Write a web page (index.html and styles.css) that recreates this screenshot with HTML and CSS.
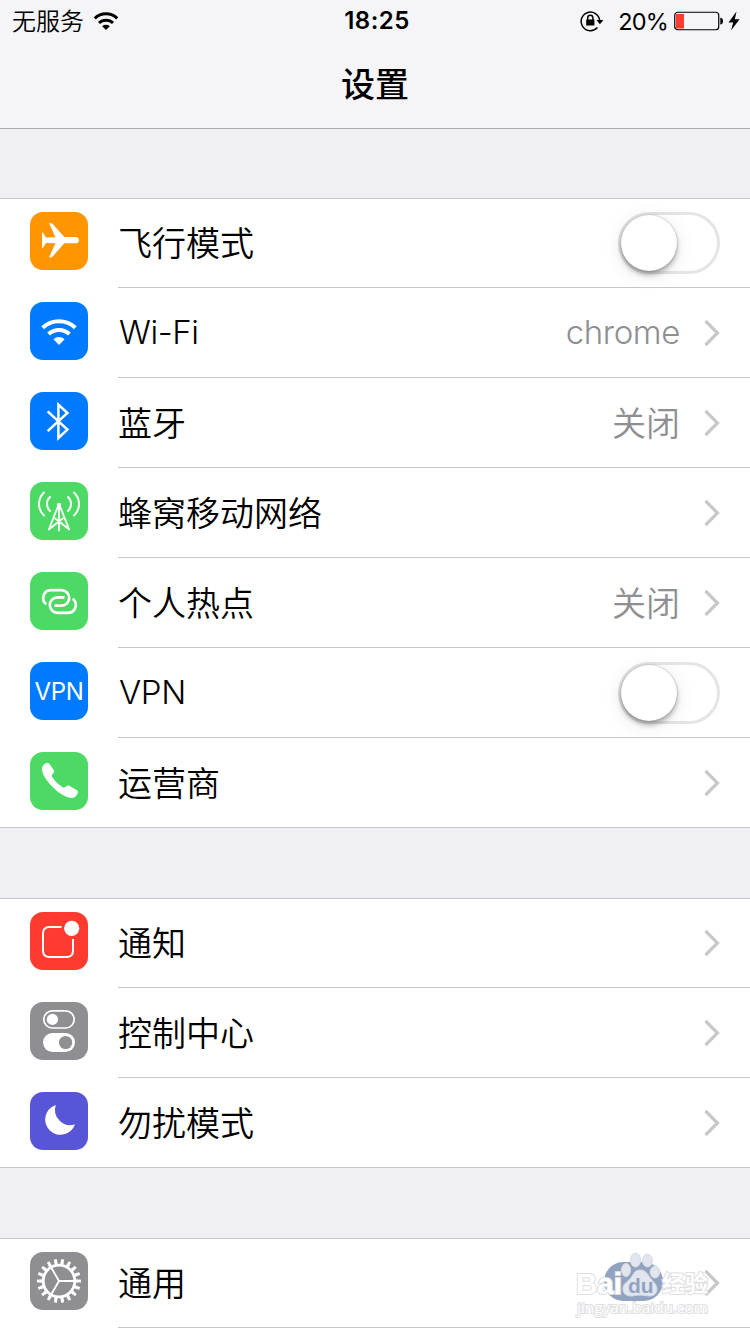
FILE: index.html
```html
<!DOCTYPE html>
<html lang="zh-CN">
<head>
    <meta charset="UTF-8">
    <meta name="viewport" content="width=device-width, initial-scale=1.0">
    <title>设置</title>
    <link rel="stylesheet" href="styles.css">
</head>
<body>
    <header class="header">
        <div class="status-bar">
            <div class="status-left">
                <span class="carrier">无服务</span>
                <svg class="status-wifi" width="26" height="20" viewBox="0 0 26 20">
                    <path d="M1.8 7.4A16 16 0 0 1 24.2 7.4M6 12A10.2 10.2 0 0 1 20 12" fill="none" stroke="#000" stroke-width="3"/>
                    <path d="M9.2 15.2a5.6 5.6 0 0 1 7.6 0L13 19z"/>
                </svg>
            </div>
            <span class="time">18:25</span>
            <div class="status-right">
                <svg class="lock" width="24" height="22" viewBox="0 0 24 22">
                    <path d="M17.4 17.6A9.3 9.3 0 1 1 19.7 10.5" fill="none" stroke="#000" stroke-width="1.5"/>
                    <path d="M16.4 10h7l-3.5 4.2zM6.2 9.6h8.2v6H6.2z"/>
                    <path d="M7.7 10V7.8a2.6 2.6 0 0 1 5.2 0V10" fill="none" stroke="#000" stroke-width="1.5"/>
                </svg>
                <span class="percent">20%</span>
                <svg class="battery" width="50" height="20" viewBox="0 0 50 20">
                    <rect x=".75" y="1.25" width="44" height="17.5" rx="3" fill="none" stroke="#000" stroke-width="1.2"/>
                    <rect x="2" y="3" width="8" height="14.5" fill="#ff3b30"/>
                    <path d="M46.3 6.8q2.7.4 2.7 3.4t-2.7 3.4z"/>
                </svg>
                <svg class="bolt" width="12" height="20" viewBox="0 0 12 20">
                    <path d="M8.5.5.5 11.5h4.7L3 19.5l8.6-11.3H6.8z"/>
                </svg>
            </div>
        </div>
        <h1 class="title">设置</h1>
    </header>

    <main>
        <section class="group">
            <div class="row">
                <svg class="icon orange" viewBox="0 0 58 58">
                    <path d="M49 28.2c0-2-1.5-3.1-4-3.1H34.3L23 12.2Q22 11 19 11l6.4 14.2-9.4.3-2.7-4.3q-.5-1-1.3-1v16q.8 0 1.3-1l2.7-4.3 9.4.3L19 45.4q3 0 4-1.2l11.3-12.9H45c2.5 0 4-1.1 4-3.1z"/>
                </svg>
                <div class="cell">
                    <span class="label">飞行模式</span>
                    <span class="toggle"></span>
                </div>
            </div>
            <div class="row">
                <svg class="icon blue" viewBox="0 0 58 58">
                    <path class="line" stroke-width="4" d="M12.7 25.8A23.8 23.8 0 0 1 45.3 25.8M18.6 32A15.2 15.2 0 0 1 39.4 32"/>
                    <path d="M23.4 37.2a8.1 8.1 0 0 1 11.2 0L29 42.9z"/>
                </svg>
                <div class="cell">
                    <span class="label latin">Wi-Fi</span>
                    <span class="value latin">chrome</span>
                    <svg class="chevron" viewBox="0 0 16 28"><path d="M1.5 2 13.5 14 1.5 26"/></svg>
                </div>
            </div>
            <div class="row">
                <svg class="icon blue" viewBox="0 0 58 58">
                    <path class="line" stroke-width="2.5" d="M17.6 19.4 37.4 37.6 28.4 46V12.6l9 8.4-19.8 18.2"/>
                </svg>
                <div class="cell">
                    <span class="label">蓝牙</span>
                    <span class="value">关闭</span>
                    <svg class="chevron" viewBox="0 0 16 28"><path d="M1.5 2 13.5 14 1.5 26"/></svg>
                </div>
            </div>
            <div class="row">
                <svg class="icon green" viewBox="0 0 58 58">
                    <g class="line round" stroke-width="2">
                        <path d="M14 10.5Q9 15 9 22t5 11.5M20 15q-3 2.7-3 7t3 7M44 10.500q5 4.500 5 11.500t-5 11.500M38 15q3 2.700 3 7t-3 7"/>
                        <path stroke-width="1.800" d="M29 23v25.500M28.500 23 18.800 47.500M29.500 23 39.200 47.500M19 47.300l13.800-10.800M39 47.300 25.200 36.500"/>
                    </g>
                    <circle cx="29" cy="23" r="2.200"/>
                </svg>
                <div class="cell">
                    <span class="label">蜂窝移动网络</span>
                    <svg class="chevron" viewBox="0 0 16 28"><path d="M1.5 2 13.5 14 1.5 26"/></svg>
                </div>
            </div>
            <div class="row">
                <svg class="icon green" viewBox="0 0 58 58">
                    <g class="line" stroke-width="2.700">
                        <path id="link" d="M16.300 32.200A7.800 7.800 0 0 1 21 18.200H31.500a7.700 7.700 0 0 1 0 15.400H24.500"/>
                        <use href="#link" transform="rotate(180 29.500 29.500)"/>
                    </g>
                </svg>
                <div class="cell">
                    <span class="label">个人热点</span>
                    <span class="value">关闭</span>
                    <svg class="chevron" viewBox="0 0 16 28"><path d="M1.5 2 13.5 14 1.5 26"/></svg>
                </div>
            </div>
            <div class="row">
                <span class="icon blue vpn">VPN</span>
                <div class="cell">
                    <span class="label latin">VPN</span>
                    <span class="toggle"></span>
                </div>
            </div>
            <div class="row">
                <svg class="icon green" viewBox="0 0 58 58">
                    <path d="M12 17c0-3.500 2.500-5.700 5.200-6 1-.2 1.700.2 2.300 1l4.200 6c.7 1 .6 1.700 0 2.600l-1.600 2.200c-.5.7-.4 1.500.1 2.300 3 4.500 6 7.500 10.500 10.200.8.500 1.600.4 2.300-.1l2.300-1.400c.8-.5 1.500-.5 2.400.1l6.900 4.200c.9.600 1.400 1.200 1.200 2.200-.7 3.200-2.900 5.700-5.700 5.700-5.600 0-12.600-4.200-18.600-10.200C16.500 28.800 12 22.500 12 17z"/>
                </svg>
                <div class="cell">
                    <span class="label">运营商</span>
                    <svg class="chevron" viewBox="0 0 16 28"><path d="M1.5 2 13.5 14 1.5 26"/></svg>
                </div>
            </div>
        </section>

        <section class="group">
            <div class="row">
                <svg class="icon red" viewBox="0 0 58 58">
                    <path class="line" stroke-width="2" d="M31.500 15H19.500Q13 15 13 21.500V38.500Q13 45 19.500 45H36.500Q43 45 43 38.500V27"/>
                    <circle cx="41.700" cy="16.300" r="7.600"/>
                </svg>
                <div class="cell">
                    <span class="label">通知</span>
                    <svg class="chevron" viewBox="0 0 16 28"><path d="M1.5 2 13.5 14 1.5 26"/></svg>
                </div>
            </div>
            <div class="row">
                <svg class="icon gray" viewBox="0 0 58 58">
                    <rect class="line" x="13.800" y="8.800" width="30.400" height="17.200" rx="8.600" stroke-width="1.700"/>
                    <circle cx="22.400" cy="17.400" r="5.600"/>
                    <rect x="13" y="31" width="32" height="19" rx="9.500"/>
                    <circle cx="35.600" cy="40.500" r="6.600" fill="#8e8e93"/>
                </svg>
                <div class="cell">
                    <span class="label">控制中心</span>
                    <svg class="chevron" viewBox="0 0 16 28"><path d="M1.5 2 13.5 14 1.5 26"/></svg>
                </div>
            </div>
            <div class="row">
                <svg class="icon purple" viewBox="0 0 58 58">
                    <path d="M25.800 12.900A15.300 15.300 0 1 0 45 32.300 15.300 15.300 0 0 1 25.800 12.900z"/>
                </svg>
                <div class="cell">
                    <span class="label">勿扰模式</span>
                    <svg class="chevron" viewBox="0 0 16 28"><path d="M1.5 2 13.5 14 1.5 26"/></svg>
                </div>
            </div>
        </section>

        <section class="group">
            <div class="row">
                <svg class="icon gray" viewBox="0 0 58 58">
                    <g class="line">
                        <circle cx="29" cy="29" r="15.800" stroke-width="2.800"/>
                        <!-- teeth, wide at the base and narrow at the tip -->
                        <circle cx="29" cy="29" r="18.200" stroke-width="2.800" pathLength="36" stroke-dasharray="1 1" stroke-dashoffset=".5"/>
                        <circle cx="29" cy="29" r="20.600" stroke-width="2.800" pathLength="36" stroke-dasharray=".8 1.200" stroke-dashoffset=".4"/>
                        <path stroke-width="1.800" d="M29 29h15M29 29l-7.500-13M29 29l-7.500 13"/>
                    </g>
                </svg>
                <div class="cell">
                    <span class="label">通用</span>
                    <svg class="chevron" viewBox="0 0 16 28"><path d="M1.5 2 13.5 14 1.5 26"/></svg>
                </div>
            </div>
        </section>
    </main>

    <svg class="watermark" width="144" height="70" viewBox="0 0 144 70">
        <rect x="34" y="14" width="59" height="39" rx="19.500" fill="#91a3c1"/>
        <g class="outlined">
            <text class="mark-name" x="6" y="46" textLength="46" lengthAdjust="spacingAndGlyphs">Bai</text>
            <text class="mark-cn" x="92" y="44">经验</text>
            <text class="mark-url" x="7" y="65" textLength="131" lengthAdjust="spacingAndGlyphs">jingyan.baidu.com</text>
        </g>
        <g class="paw">
            <ellipse cx="56" cy="22" rx="4.500" ry="6.500"/>
            <ellipse cx="65.500" cy="12" rx="5" ry="7"/>
            <ellipse cx="77.500" cy="12.500" rx="5" ry="6.500"/>
            <ellipse cx="85" cy="24" rx="4.800" ry="6"/>
            <path d="M70 22c6 0 8 5 11 9s6 6 6 10-3 7-7 7c-4 0-6-1-10-1s-6 1-9 1c-5 0-8-3-8-7 0-5 4-7 7-10s4-9 10-9z"/>
        </g>
        <text class="mark-du" x="58" y="45">du</text>
    </svg>
</body>
</html>
```
FILE: styles.css
```css
:root {
    --line: #c8c7cc;
    --page: #efeff4;
    --gray: #8e8e93;
}

* {
    box-sizing: border-box;
}

body, html {
    margin: 0;
    padding: 0;
    height: 100%;
    overflow: hidden;
}

body {
    position: relative;
    background: var(--page);
    color: #000;
    font-family: Inter, 'Noto Sans CJK SC', sans-serif;
}

.header {
    height: 129px;
    background: #f5f5f7;
    border-bottom: 1px solid #a9a9ae;
}

.status-bar {
    display: grid;
    grid-template-columns: 1fr auto 1fr;
    align-items: center;
    height: 40px;
    padding: 0 10px 0 12px;
    font-size: 24px;
    line-height: 40px;
}

.status-left, .status-right {
    display: flex;
    align-items: center;
}

.status-left {
    gap: 9px;
}

.status-right {
    justify-content: flex-end;
    height: 40px;
}

.carrier {
    height: 40px;
    font-family: 'Noto Sans CJK SC', sans-serif;
    font-weight: 350;
    line-height: 38px;
}

.time {
    padding: 1px 0 0 2px;
    font-weight: 600;
    letter-spacing: 0.5px;
}

.percent {
    margin: 2px 6px 0 13px;
    font-size: 23.5px;
    letter-spacing: -0.8px;
}

.lock {
    margin-right: 1px;
}

.bolt {
    margin-left: 4px;
}

.title {
    margin: 0;
    padding-top: 20px;
    font-size: 34px;
    font-weight: 500;
    line-height: 50px;
    text-align: center;
}

/* grouped lists */
.group {
    margin-top: 70px;
    background: #fff;
    box-shadow: inset 0 1px var(--line);
}

.header + main .group:first-child {
    margin-top: 69px;
}

.row {
    display: flex;
    align-items: flex-start;
    height: 90px;
    padding-left: 30px;
}

.row:last-child {
    box-shadow: inset 0 -1px var(--line);
}

.group:last-child {
    height: 96px;
}

.group:last-child .row {
    box-shadow: none;
}

.icon {
    flex: none;
    width: 58px;
    height: 58px;
    margin: 14px 30px 0 0;
    border-radius: 13px;
    fill: #fff;
}

.line {
    fill: none;
    stroke: #fff;
}

.round {
    stroke-linecap: round;
}

.orange { background: #ff9500; }
.blue { background: #007aff; }
.green { background: #4cd964; }
.red { background: #ff3b30; }
.gray { background: var(--gray); }
.purple { background: #5856d6; }

.vpn {
    color: #fff;
    font-size: 24px;
    letter-spacing: -0.3px;
    line-height: 60px;
    text-align: center;
}

.cell {
    flex: 1;
    display: flex;
    align-items: center;
    height: 90px;
    padding: 1px 30px 0 0;
    border-bottom: 1px solid var(--line);
}

.label, .value {
    padding-bottom: 3px;
    font-family: 'Noto Sans CJK SC', sans-serif;
    font-size: 34px;
    font-weight: 350;
    line-height: 50px;
}

.label {
    flex: 1;
}

.value {
    color: var(--gray);
    margin-right: -1px;
}

.latin {
    padding: 0 0 2px 1px;
    font-family: Inter, sans-serif;
    font-size: 33px;
    letter-spacing: -0.4px;
}

.chevron {
    width: 16px;
    height: 28px;
    margin-left: 25px;
    fill: none;
    stroke: #c7c7cc;
    stroke-width: 3.2;
}

.toggle {
    width: 102px;
    height: 62px;
    border: 3px solid #e5e5e5;
    border-radius: 31px;
    background: #fff;
}

.toggle::before {
    content: '';
    display: block;
    width: 56px;
    height: 56px;
    border-radius: 50%;
    background: #fff;
    box-shadow: 0 0 2px rgba(0, 0, 0, 0.3), 0 4px 5px rgba(0, 0, 0, 0.28), 0 4px 20px rgba(0, 0, 0, 0.1);
}

/* watermark over the last row */
.watermark {
    position: absolute;
    left: 570px;
    top: 1248px;
}

.outlined {
    fill: #fff;
    stroke: #dededf;
    stroke-width: 2px;
    paint-order: stroke;
}

.mark-name {
    font: bold 30px/1 'Liberation Sans', sans-serif;
}

.mark-cn {
    font: bold 23px/1 'Noto Sans CJK SC', sans-serif;
}

.mark-url {
    font: 15px/1 'Open Sans', sans-serif;
}

.mark-du {
    font: bold 21px/1 'Liberation Sans', sans-serif;
    fill: #91a3c1;
}

.paw {
    fill: #e1e6ee;
    stroke: #d8dce4;
    stroke-width: 1;
}
```
